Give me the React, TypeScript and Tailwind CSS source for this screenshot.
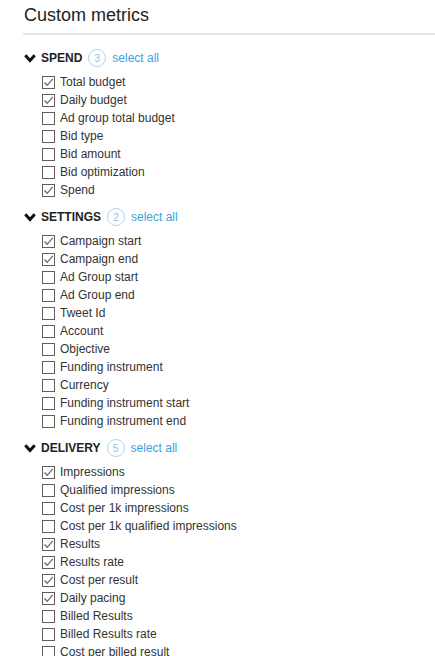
import React from "react";

type Section = {
  title: string;
  items: [string, boolean][];
};

const SECTIONS: Section[] = [
  {
    title: "SPEND",
    items: [
      ["Total budget", true],
      ["Daily budget", true],
      ["Ad group total budget", false],
      ["Bid type", false],
      ["Bid amount", false],
      ["Bid optimization", false],
      ["Spend", true],
    ],
  },
  {
    title: "SETTINGS",
    items: [
      ["Campaign start", true],
      ["Campaign end", true],
      ["Ad Group start", false],
      ["Ad Group end", false],
      ["Tweet Id", false],
      ["Account", false],
      ["Objective", false],
      ["Funding instrument", false],
      ["Currency", false],
      ["Funding instrument start", false],
      ["Funding instrument end", false],
    ],
  },
  {
    title: "DELIVERY",
    items: [
      ["Impressions", true],
      ["Qualified impressions", false],
      ["Cost per 1k impressions", false],
      ["Cost per 1k qualified impressions", false],
      ["Results", true],
      ["Results rate", true],
      ["Cost per result", true],
      ["Daily pacing", true],
      ["Billed Results", false],
      ["Billed Results rate", false],
      ["Cost per billed result", false],
    ],
  },
];

const Checkbox = ({ checked }: { checked: boolean }) => (
  <span className="w-[13px] h-[13px] border border-[#5f5f5f] bg-white flex items-center justify-center shrink-0">
    {checked && (
      <svg width="11" height="11" viewBox="0 0 11 11">
        <path d="M1.5 5.5 L4.2 8.3 L9.8 1.8" fill="none" stroke="#6a6a6a" strokeWidth="1.3" />
      </svg>
    )}
  </span>
);

const Chevron = () => (
  <svg width="12" height="9" viewBox="0 0 12 9" className="shrink-0">
    <path d="M1.3 1.3 L6 6.6 L10.7 1.3" fill="none" stroke="#111" strokeWidth="3" />
  </svg>
);

const MetricSection = ({ section }: { section: Section }) => {
  const count = section.items.filter(([, c]) => c).length;
  return (
    <div className="mb-[8px]">
      <div className="flex items-center h-[20px] mb-[5px]">
        <Chevron />
        <span className="ml-[5px] text-[12px] font-bold text-[#222]">{section.title}</span>
        <span className="ml-[6px] w-[18px] h-[18px] rounded-full border border-[#a9d5f5] text-[#86c2ee] text-[10px] flex items-center justify-center">
          {count}
        </span>
        <span className="ml-[6px] text-[12px] text-[#3d9fe3]">select all</span>
      </div>
      <div className="pl-[18px] flex flex-col">
        {section.items.map(([label, checked]) => (
          <label key={label} className="h-[18px] flex items-center gap-[5px]">
            <Checkbox checked={checked} />
            <span className="text-[12px] text-[#333]">{label}</span>
          </label>
        ))}
      </div>
    </div>
  );
};

export default function App() {
  return (
    <div className="bg-white min-h-screen pl-[23px] font-['Liberation_Sans',Arial,sans-serif]">
      <h1 className="pt-[3px] pl-[1px] text-[18px] leading-[24px] text-[#222]">Custom metrics</h1>
      <div className="mt-[6px] h-[2px] bg-[#e3e8ee]" />
      <div className="pt-[13px] pl-[1px]">
        {SECTIONS.map((s) => (
          <MetricSection key={s.title} section={s} />
        ))}
      </div>
    </div>
  );
}
